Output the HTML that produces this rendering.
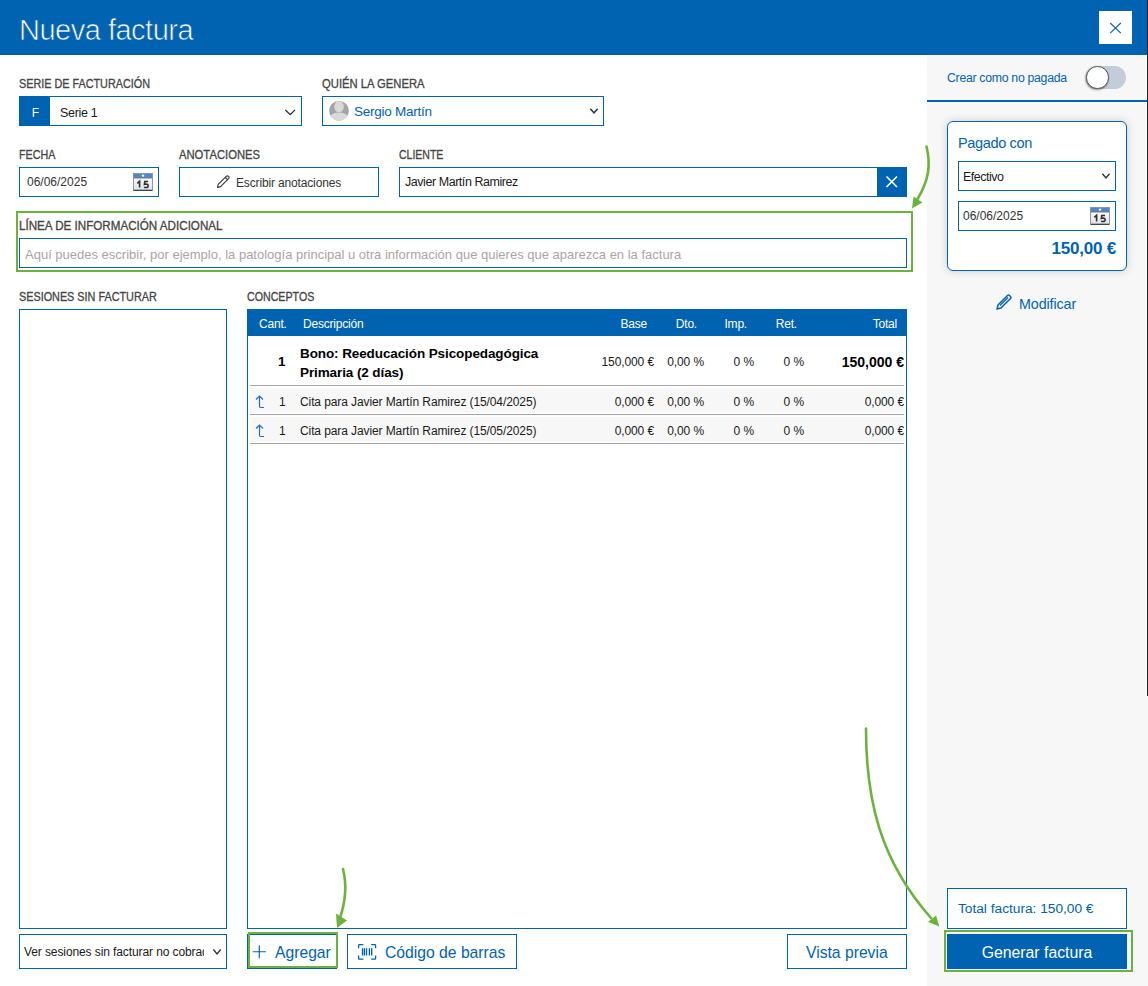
<!DOCTYPE html>
<html><head><meta charset="utf-8">
<style>
*{box-sizing:border-box;margin:0;padding:0}
html,body{width:1148px;height:986px;overflow:hidden;background:#fff;font-family:"Liberation Sans",sans-serif;position:relative}
.a{position:absolute}
.hdr{left:0;top:0;width:1148px;height:55px;background:#0063b1}
.title{left:19px;top:14px;font-size:29px;color:#fff;letter-spacing:-0.5px;-webkit-text-stroke:0.7px #0063b1;white-space:nowrap}
.closeb{left:1099px;top:11px;width:33px;height:33px;background:#fff}
.lbl{font-size:12px;line-height:normal;transform-origin:0 0;color:#444;white-space:nowrap;letter-spacing:0px;-webkit-text-stroke:0.3px #444}
.box{border:1px solid #0063b1;background:#fff}
.txt{font-size:12.5px;color:#1a1a1a;white-space:nowrap;letter-spacing:-0.3px}
.rp{left:927px;top:55px;width:221px;height:931px;background:#f7f7f7}
.green{border:2.2px solid #6cb33e}
.sep{height:1px;background:#a3a3a3}
.row{background:#f7f7f7}
.blue{color:#0063b1}
.th{font-size:12px;color:#fff;white-space:nowrap;letter-spacing:-0.2px}
.r{text-align:right}
.td{font-size:12px;color:#1a1a1a;white-space:nowrap;letter-spacing:-0.1px}
.bold{font-weight:bold;color:#000;white-space:nowrap}
.bold.blue{color:#0063b1}
.btxt{font-size:15.7px;color:#0063b1;white-space:nowrap;letter-spacing:0px}
</style></head>
<body>
<div class="a hdr"></div>
<div class="a title">Nueva factura</div>
<div class="a closeb"><svg width="33" height="33" viewBox="0 0 33 33"><path d="M11.2 12L21.8 22.2M21.8 12L11.2 22.2" stroke="#0063b1" stroke-width="1.15" fill="none"/></svg></div>

<!-- right panel -->
<div class="a rp"></div>
<div class="a" style="left:1146px;top:55px;width:1px;height:641px;background:#fff"></div><div class="a" style="left:1147px;top:0;width:1px;height:696px;background:#1c1c1c"></div>

<!-- Serie -->
<div class="a lbl" style="left:19px;top:77px;transform:scaleX(0.901)">SERIE DE FACTURACIÓN</div>
<div class="a box" style="left:19px;top:96px;width:283px;height:30px"></div>
<div class="a" style="left:19px;top:96px;width:31px;height:30px;background:#0063b1;color:#fff;font-size:12px;text-align:center;line-height:34px;padding-left:2px">F</div>
<div class="a txt" style="left:60px;top:106px">Serie 1</div>
<svg class="a" style="left:285px;top:107px" width="12" height="9" viewBox="0 0 12 9"><path d="M0.3 2.9L5.2 7.6L10 2.9" stroke="#222" stroke-width="1.2" fill="none"/></svg>

<!-- Quien -->
<div class="a lbl" style="left:322px;top:77px;transform:scaleX(0.938)">QUIÉN LA GENERA</div>
<div class="a box" style="left:322px;top:96px;width:282px;height:30px"></div>
<svg class="a" style="left:328px;top:100px" width="22" height="22" viewBox="0 0 22 22"><defs><clipPath id="cc"><circle cx="11" cy="10.8" r="9.85"/></clipPath></defs><circle cx="11" cy="10.8" r="9.85" fill="#a4a4a4"/><g clip-path="url(#cc)" fill="#d9d9d9"><ellipse cx="11" cy="6.7" rx="4.8" ry="5.6"/><ellipse cx="11" cy="19.6" rx="11" ry="7"/></g></svg>
<div class="a txt blue" style="left:354px;top:104px;font-size:13.5px;letter-spacing:-0.25px">Sergio Martín</div>
<svg class="a" style="left:588px;top:106px" width="12" height="9" viewBox="0 0 12 9"><path d="M2.3 2.8L6 6.8L9.7 2.8" stroke="#333" stroke-width="1.5" fill="none"/></svg>

<!-- Fecha -->
<div class="a lbl" style="left:19px;top:148px;transform:scaleX(0.893)">FECHA</div>
<div class="a box" style="left:19px;top:167px;width:140px;height:30px"></div>
<div class="a txt" style="left:27px;top:175px;font-size:12px;color:#333;letter-spacing:0">06/06/2025</div>
<svg class="a cal" style="left:133px;top:173px" width="20" height="18" viewBox="0 0 20 18"><defs><linearGradient id="cg133" x1="0" y1="0" x2="0" y2="1"><stop offset="0" stop-color="#ffffff"/><stop offset="1" stop-color="#dfe5ec"/></linearGradient></defs><rect x="0.5" y="0.4" width="19" height="17" fill="url(#cg133)" stroke="#8a8a8a" stroke-width="0.9"/><rect x="1" y="0.8" width="18" height="3.8" fill="#4a8ad0"/><path d="M0.8 4.9H19.2" stroke="#3d3d3d" stroke-width="0.8"/><path d="M0.8 17.3H19.2" stroke="#3a3a3a" stroke-width="1.2"/><circle cx="10" cy="2.6" r="1.2" fill="#fff"/><path d="M4.3 10.3L6.6 8.2V14.6" stroke="#2f2f2f" stroke-width="1.6" fill="none"/><path d="M15 8.6H11.7L11.4 11.3Q12.1 10.9 13 10.9Q15.2 11 15.2 12.8Q15.2 14.6 13 14.6Q11.9 14.6 11.1 14.1" stroke="#2f2f2f" stroke-width="1.5" fill="none"/></svg>

<!-- Anotaciones -->
<div class="a lbl" style="left:179px;top:148px;transform:scaleX(0.937)">ANOTACIONES</div>
<div class="a box" style="left:179px;top:167px;width:200px;height:30px"></div>
<svg class="a" style="left:216px;top:175px" width="15" height="14" viewBox="0 0 15 14"><path d="M1.5 12.5L2.2 9.3L10.5 1.2Q11.5 0.4 12.6 1.4Q13.5 2.4 12.8 3.3L4.6 11.6Z M9.3 2.5L11.6 4.7" stroke="#333" stroke-width="1.1" fill="none" stroke-linejoin="round"/></svg>
<div class="a txt" style="left:236px;top:176px;font-size:12px;color:#333;letter-spacing:-0.15px">Escribir anotaciones</div>

<!-- Cliente -->
<div class="a lbl" style="left:399px;top:148px;transform:scaleX(0.874)">CLIENTE</div>
<div class="a box" style="left:399px;top:167px;width:508px;height:30px"></div>
<div class="a" style="left:877px;top:167px;width:30px;height:30px;background:#0063b1"></div>
<svg class="a" style="left:877px;top:167px" width="30" height="30" viewBox="0 0 30 30"><path d="M9.5 9.5L20 20M20 9.5L9.5 20" stroke="#fff" stroke-width="1.6" fill="none"/></svg>
<div class="a txt" style="left:405px;top:175px;font-size:12.5px;letter-spacing:-0.45px">Javier Martín Ramirez</div>

<!-- Linea info -->
<div class="a green" style="left:16px;top:211px;width:897px;height:61px"></div>
<div class="a lbl" style="left:19px;top:219px;transform:scaleX(0.969)">LÍNEA DE INFORMACIÓN ADICIONAL</div>
<div class="a box" style="left:19px;top:238px;width:888px;height:30px"></div>
<div class="a txt" style="left:25px;top:247px;font-size:13px;color:#a6a6a6;letter-spacing:0px">Aquí puedes escribir, por ejemplo, la patología principal u otra información que quieres que aparezca en la factura</div>

<!-- Sesiones -->
<div class="a lbl" style="left:19px;top:290px;transform:scaleX(0.902)">SESIONES SIN FACTURAR</div>
<div class="a box" style="left:19px;top:309px;width:208px;height:620px"></div>
<div class="a box" style="left:19px;top:934px;width:208px;height:35px"></div>
<div class="a txt" style="left:24px;top:945px;font-size:12px;width:180px;overflow:hidden;letter-spacing:-0.1px">Ver sesiones sin facturar no cobrados</div>
<svg class="a" style="left:211px;top:947px" width="12" height="9" viewBox="0 0 12 9"><path d="M2.4 2.5L6 6.9L9.7 2.5" stroke="#333" stroke-width="1.4" fill="none"/></svg>

<!-- Conceptos -->
<div class="a lbl" style="left:247px;top:290px;transform:scaleX(0.888)">CONCEPTOS</div>
<div class="a box" style="left:247px;top:309px;width:660px;height:620px"></div>
<div class="a" style="left:247px;top:309px;width:660px;height:27px;background:#0063b1"></div>
<div class="a th" style="left:259px;top:317px">Cant.</div>
<div class="a th" style="left:303px;top:317px">Descripción</div>
<div class="a th r" style="left:560px;top:317px;width:87px">Base</div>
<div class="a th r" style="left:600px;top:317px;width:97px">Dto.</div>
<div class="a th r" style="left:650px;top:317px;width:97px">Imp.</div>
<div class="a th r" style="left:700px;top:317px;width:97px">Ret.</div>
<div class="a th r" style="left:800px;top:317px;width:97px">Total</div>

<!-- row 1 -->
<div class="a bold" style="left:278px;top:354px;font-size:13.5px">1</div>
<div class="a bold" style="left:300px;top:344px;font-size:13.5px;line-height:19px;letter-spacing:-0.1px">Bono: Reeducación Psicopedagógica<br>Primaria (2 días)</div>
<div class="a td r" style="left:554px;top:355px;width:100px">150,000 €</div>
<div class="a td r" style="left:604px;top:355px;width:100px">0,00 %</div>
<div class="a td r" style="left:654px;top:355px;width:100px">0 %</div>
<div class="a td r" style="left:704px;top:355px;width:100px">0 %</div>
<div class="a bold r" style="left:804px;top:354px;width:100px;font-size:14px;letter-spacing:0px;overflow:hidden;white-space:nowrap">150,000 €</div>
<div class="a sep" style="left:250px;top:385px;width:654px"></div>

<!-- row 2 -->
<div class="a row" style="left:250px;top:388px;width:654px;height:25px"></div>
<svg class="a" style="left:254px;top:395px" width="12" height="15" viewBox="0 0 12 15"><path d="M2 4.5L5.5 1.1L9 4.5M5.5 1.3V11.3Q5.5 12.5 6.7 12.5H10" stroke="#1f6fc0" stroke-width="1.2" fill="none"/></svg>
<div class="a td" style="left:279px;top:395px">1</div>
<div class="a td" style="left:300px;top:395px;letter-spacing:-0.1px">Cita para Javier Martín Ramirez (15/04/2025)</div>
<div class="a td r" style="left:554px;top:395px;width:100px">0,000 €</div>
<div class="a td r" style="left:604px;top:395px;width:100px">0,00 %</div>
<div class="a td r" style="left:654px;top:395px;width:100px">0 %</div>
<div class="a td r" style="left:704px;top:395px;width:100px">0 %</div>
<div class="a td r" style="left:804px;top:395px;width:100px">0,000 €</div>
<div class="a sep" style="left:250px;top:414px;width:654px"></div>

<!-- row 3 -->
<div class="a row" style="left:250px;top:417px;width:654px;height:25px"></div>
<svg class="a" style="left:254px;top:424px" width="12" height="15" viewBox="0 0 12 15"><path d="M2 4.5L5.5 1.1L9 4.5M5.5 1.3V11.3Q5.5 12.5 6.7 12.5H10" stroke="#1f6fc0" stroke-width="1.2" fill="none"/></svg>
<div class="a td" style="left:279px;top:424px">1</div>
<div class="a td" style="left:300px;top:424px;letter-spacing:-0.1px">Cita para Javier Martín Ramirez (15/05/2025)</div>
<div class="a td r" style="left:554px;top:424px;width:100px">0,000 €</div>
<div class="a td r" style="left:604px;top:424px;width:100px">0,00 %</div>
<div class="a td r" style="left:654px;top:424px;width:100px">0 %</div>
<div class="a td r" style="left:704px;top:424px;width:100px">0 %</div>
<div class="a td r" style="left:804px;top:424px;width:100px">0,000 €</div>
<div class="a sep" style="left:250px;top:443px;width:654px"></div>

<!-- bottom buttons -->
<div class="a box" style="left:247px;top:934px;width:90px;height:35px"></div>
<div class="a green" style="left:248px;top:932px;width:90px;height:35.5px"></div>
<svg class="a" style="left:252px;top:945px" width="15" height="15" viewBox="0 0 15 15"><path d="M7.3 0.3V13.2M0.7 6.7H13.8" stroke="#0063b1" stroke-width="1.15" fill="none"/></svg>
<div class="a btxt" style="left:275px;top:944px">Agregar</div>

<div class="a box" style="left:347px;top:934px;width:170px;height:35px"></div>
<svg class="a" style="left:352px;top:938px" width="30" height="26" viewBox="0 0 30 26"><g stroke="#0063b1" stroke-width="1.3" fill="none"><path d="M6.6 10.3V7.4Q6.6 6.6 7.4 6.6H11.4M19.2 6.6H22.8Q23.6 6.6 23.6 7.4V10.3M6.6 17.4V20.4Q6.6 21.2 7.4 21.2H11.4M19.2 21.2H22.8Q23.6 21.2 23.6 20.4V17.4"/><path d="M10.5 10.3V17.6M12.4 10.3V17.6M14.5 10.3V17.6M17.4 10.3V17.6M19.7 10.3V17.6" stroke-width="1.35"/></g></svg>
<div class="a btxt" style="left:385px;top:944px">Código de barras</div>

<div class="a box" style="left:787px;top:934px;width:120px;height:35px"></div>
<div class="a btxt" style="left:806px;top:944px">Vista previa</div>

<!-- right panel content -->
<div class="a blue" style="left:947px;top:71px;font-size:12.3px;letter-spacing:-0.3px;white-space:nowrap">Crear como no pagada</div>
<div class="a" style="left:1086px;top:66px;width:40px;height:23px;border-radius:12px;background:#c3cdd9"></div>
<div class="a" style="left:1086px;top:66px;width:22.6px;height:22.6px;border-radius:50%;background:#fff;border:1.2px solid #55585c;box-shadow:-0.5px 0.8px 2px rgba(0,0,0,.5)"></div>
<div class="a" style="left:927px;top:100px;width:220px;height:1.5px;background:#0063b1"></div>

<div class="a" style="left:947px;top:121px;width:180px;height:150px;border:1.3px solid #0063b1;border-radius:6px;background:#fff;box-shadow:0 0 8px rgba(0,0,0,.18)"></div>
<div class="a blue" style="left:958px;top:135px;font-size:14.5px;letter-spacing:-0.35px;white-space:nowrap">Pagado con</div>
<div class="a box" style="left:958px;top:161px;width:158px;height:30px"></div>
<div class="a txt" style="left:963px;top:170px;font-size:12.5px;letter-spacing:-0.5px">Efectivo</div>
<svg class="a" style="left:1100px;top:172px" width="12" height="9" viewBox="0 0 12 9"><path d="M2.4 1.8L6 5.9L9.5 1.8" stroke="#333" stroke-width="1.5" fill="none"/></svg>
<div class="a box" style="left:958px;top:201px;width:158px;height:30px"></div>
<div class="a txt" style="left:963px;top:209px;font-size:12px;color:#333;letter-spacing:0px">06/06/2025</div>
<svg class="a cal" style="left:1090px;top:207px" width="20" height="18" viewBox="0 0 20 18"><defs><linearGradient id="cg1090" x1="0" y1="0" x2="0" y2="1"><stop offset="0" stop-color="#ffffff"/><stop offset="1" stop-color="#dfe5ec"/></linearGradient></defs><rect x="0.5" y="0.4" width="19" height="17" fill="url(#cg1090)" stroke="#8a8a8a" stroke-width="0.9"/><rect x="1" y="0.8" width="18" height="3.8" fill="#4a8ad0"/><path d="M0.8 4.9H19.2" stroke="#3d3d3d" stroke-width="0.8"/><path d="M0.8 17.3H19.2" stroke="#3a3a3a" stroke-width="1.2"/><circle cx="10" cy="2.6" r="1.2" fill="#fff"/><path d="M4.3 10.3L6.6 8.2V14.6" stroke="#2f2f2f" stroke-width="1.6" fill="none"/><path d="M15 8.6H11.7L11.4 11.3Q12.1 10.9 13 10.9Q15.2 11 15.2 12.8Q15.2 14.6 13 14.6Q11.9 14.6 11.1 14.1" stroke="#2f2f2f" stroke-width="1.5" fill="none"/></svg>
<div class="a bold blue r" style="left:1000px;top:239px;width:116px;font-size:17px;letter-spacing:-0.2px">150,00 €</div>

<svg class="a" style="left:996px;top:294px" width="16" height="16" viewBox="0 0 16 16"><path d="M1 15L2 11L11.5 1.5Q12.5 0.6 13.5 1.5L14.5 2.5Q15.4 3.5 14.5 4.5L5 14Z" stroke="#0063b1" stroke-width="1.5" fill="none" stroke-linejoin="round"/><path d="M4 11.5L12 3.5" stroke="#0063b1" stroke-width="1.2"/></svg>
<div class="a blue" style="left:1019px;top:296px;font-size:14.3px;letter-spacing:-0.1px;white-space:nowrap">Modificar</div>

<div class="a box" style="left:947px;top:888px;width:180px;height:41px"></div>
<div class="a blue" style="left:958px;top:901px;font-size:13.7px;letter-spacing:0px;white-space:nowrap">Total factura: 150,00 €</div>
<div class="a green" style="left:944px;top:930px;width:189px;height:42px"></div>
<div class="a" style="left:947px;top:934px;width:180px;height:35px;background:#0063b1"></div>
<div class="a" style="left:947px;top:944px;width:180px;text-align:center;color:#fff;font-size:15.8px;letter-spacing:0px;white-space:nowrap">Generar factura</div>

<!-- arrows -->
<svg class="a" style="left:0;top:0;pointer-events:none" width="1148" height="986" viewBox="0 0 1148 986">
<g stroke="#6cb33e" stroke-width="2.6" fill="none" stroke-linecap="round">
<path d="M926.5 146.5C931 165 929 180 917 200"/>
<path d="M343 869C347 885 346 900 340 918"/>
<path d="M866 728.5C866 800 880 860 931 918"/>
</g>
<g fill="#6cb33e">
<path d="M912 208.5L913.5 196.5L922.5 202.5Z"/>
<path d="M337 928L336 913.5L347 920.5Z"/>
<path d="M939.5 926.5L928 922L936 915.5Z"/>
</g>
</svg>
</body></html>
